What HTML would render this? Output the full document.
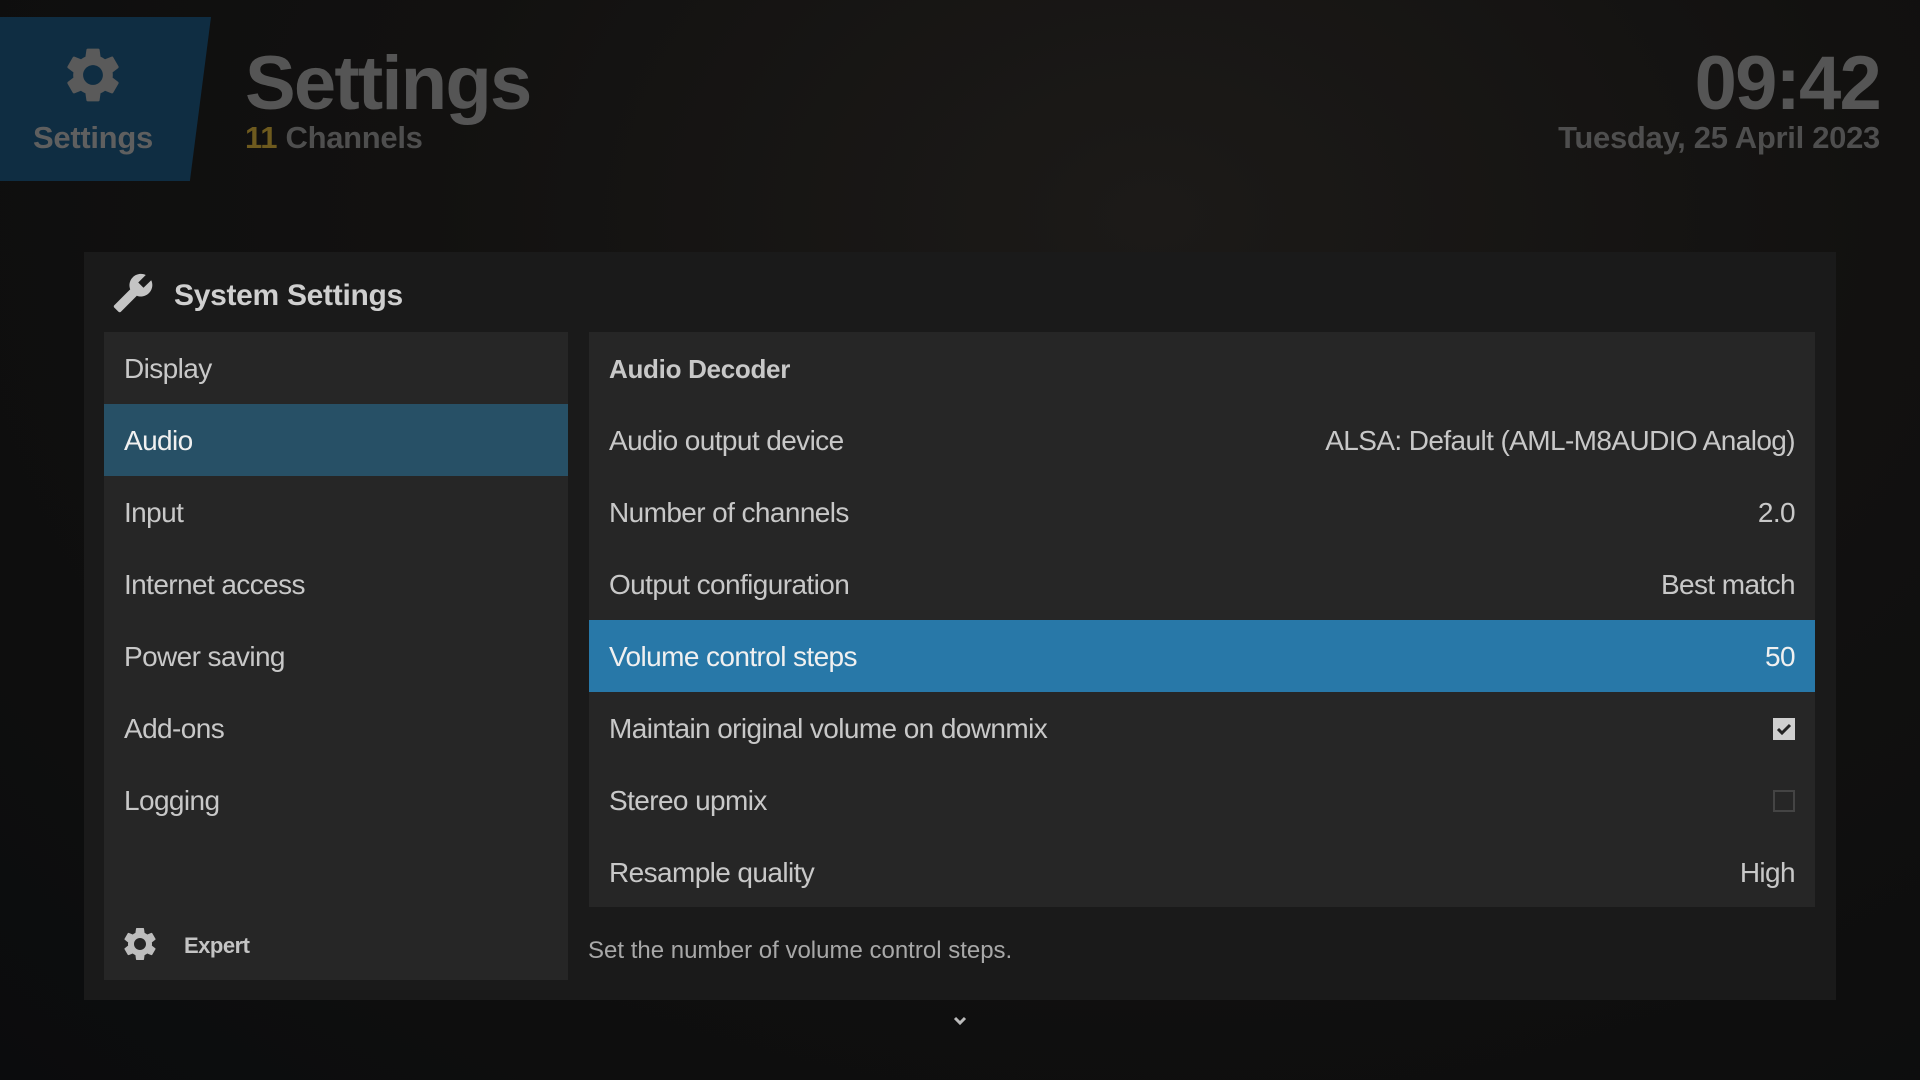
<!DOCTYPE html>
<html><head><meta charset="utf-8"><style>
*{margin:0;padding:0;box-sizing:border-box}
body{width:1920px;height:1080px;overflow:hidden;font-family:"Liberation Sans",sans-serif;
background:radial-gradient(ellipse at 60% 20%,#1c1a18 0%,#121110 45%,#0b0c0d 100%);position:relative;color:#ccc}
.abs{position:absolute}
.tile{left:0;top:17px;width:211px;height:164px;background:#0f2d42;clip-path:polygon(0 0,100% 0,90% 100%,0 100%)}
.big{font-weight:bold;font-size:76px;color:#555;letter-spacing:-1.8px}
.sub{font-weight:bold;font-size:31px;color:#4e4e4e;letter-spacing:-0.3px}
.panel{left:84px;top:252px;width:1752px;height:748px;background:#1a1a1a}
.left{left:104px;top:332px;width:464px;height:648px;background:#262626}
.item{position:absolute;left:0;width:464px;height:72px;line-height:74px;padding-left:20px;font-size:28px;color:#c8c8c8;letter-spacing:-0.6px}
.right{left:589px;top:332px;width:1226px;height:575px;background:#262626}
.row{position:absolute;left:0;width:1226px;height:72px;line-height:74px;padding:0 20px;font-size:28px;color:#c8c8c8;letter-spacing:-0.6px}
.row .v{position:absolute;right:20px;top:0}
.sel{background:#2878a8;color:#f0f0f0}
</style></head><body>
<div class="abs tile"></div>
<svg class="abs" style="left:60px;top:42px" width="66" height="66" viewBox="0 0 24 24"><path fill="#5a5a5a" d="M19.14 12.94c.04-.3.06-.61.06-.94 0-.32-.02-.64-.07-.94l2.03-1.58a.49.49 0 0 0 .12-.61l-1.92-3.32a.488.488 0 0 0-.59-.22l-2.39.96c-.5-.38-1.03-.7-1.62-.94l-.36-2.54a.484.484 0 0 0-.48-.41h-3.84c-.24 0-.43.17-.47.41l-.36 2.54c-.59.24-1.130.57-1.62.94l-2.39-.96c-.22-.08-.47 0-.59.22L2.74 8.87c-.12.21-.08.47.12.61l2.03 1.58c-.05.3-.09.63-.09.94s.02.64.07.94l-2.03 1.58a.49.49 0 0 0-.12.61l1.92 3.32c.12.22.37.29.59.22l2.39-.96c.5.38 1.03.7 1.62.94l.36 2.54c.05.24.24.41.48.41h3.84c.24 0 .44-.17.47-.41l.36-2.54c.59-.24 1.13-.56 1.62-.94l2.39.96c.22.08.47 0 .59-.22l1.92-3.32c.12-.22.07-.47-.12-.61l-2.01-1.58zM12 15.6c-1.98 0-3.6-1.62-3.6-3.6s1.62-3.6 3.6-3.6 3.6 1.62 3.6 3.6-1.62 3.6-3.6 3.6z"/></svg>
<div class="abs sub" style="left:33px;top:120px;color:#5f5f5f">Settings</div>
<div class="abs big" style="left:245px;top:40px">Settings</div>
<div class="abs sub" style="left:245px;top:120px"><span style="color:#6e5a1e">11</span> Channels</div>
<div class="abs big" style="right:40px;top:40px">09:42</div>
<div class="abs sub" style="right:40px;top:120px">Tuesday, 25 April 2023</div>

<div class="abs panel"></div>
<svg class="abs" style="left:112px;top:272px" width="42" height="42" viewBox="0 0 24 24"><path fill="#c4c4c4" d="M22.7 19l-9.1-9.1c.9-2.3.4-5-1.5-6.9-2-2-5-2.4-7.4-1.3L9 6 6 9 1.6 4.7C.4 7.1.9 10.1 2.9 12.1c1.9 1.9 4.6 2.4 6.9 1.5l9.1 9.1c.4.4 1 .4 1.4 0l2.3-2.3c.5-.4.5-1.1.1-1.4z" transform="translate(24 0) scale(-1 1)"/></svg>
<div class="abs" style="left:174px;top:279px;font-size:30px;font-weight:bold;color:#cfcfcf;letter-spacing:-0.3px">System Settings</div>

<div class="abs left">
<div class="item" style="top:0">Display</div>
<div class="item" style="top:72px;background:#275066;color:#f0f0f0">Audio</div>
<div class="item" style="top:144px">Input</div>
<div class="item" style="top:216px">Internet access</div>
<div class="item" style="top:288px">Power saving</div>
<div class="item" style="top:360px">Add-ons</div>
<div class="item" style="top:432px">Logging</div>
</div>
<svg class="abs" style="left:120px;top:924px" width="40" height="40" viewBox="0 0 24 24"><path fill="#bdbdbd" d="M19.14 12.94c.04-.3.06-.61.06-.94 0-.32-.02-.64-.07-.94l2.03-1.58a.49.49 0 0 0 .12-.61l-1.92-3.32a.488.488 0 0 0-.59-.22l-2.39.96c-.5-.38-1.03-.7-1.62-.94l-.36-2.54a.484.484 0 0 0-.48-.41h-3.84c-.24 0-.43.17-.47.41l-.36 2.54c-.59.24-1.13.57-1.62.94l-2.39-.96c-.22-.08-.47 0-.59.22L2.74 8.87c-.12.21-.08.47.12.61l2.03 1.58c-.05.3-.09.63-.09.94s.02.64.07.94l-2.03 1.58a.49.49 0 0 0-.12.61l1.92 3.32c.12.22.37.29.59.22l2.39-.96c.5.38 1.03.7 1.62.94l.36 2.54c.05.24.24.41.48.41h3.84c.24 0 .44-.17.47-.41l.36-2.54c.59-.24 1.13-.56 1.62-.94l2.39.96c.22.08.47 0 .59-.22l1.92-3.32c.12-.22.07-.47-.12-.61l-2.01-1.58zM12 15.6c-1.98 0-3.6-1.620-3.6-3.6s1.62-3.6 3.6-3.6 3.6 1.62 3.6 3.6-1.62 3.6-3.6 3.6z"/></svg>
<div class="abs" style="left:184px;top:933px;font-size:22px;font-weight:bold;color:#c4c4c4;letter-spacing:-0.5px">Expert</div>

<div class="abs right">
<div class="row" style="top:0;font-weight:bold;font-size:26px;letter-spacing:-0.3px">Audio Decoder</div>
<div class="row" style="top:72px">Audio output device<span class="v">ALSA: Default (AML-M8AUDIO Analog)</span></div>
<div class="row" style="top:144px">Number of channels<span class="v">2.0</span></div>
<div class="row" style="top:216px">Output configuration<span class="v">Best match</span></div>
<div class="row sel" style="top:288px">Volume control steps<span class="v">50</span></div>
<div class="row" style="top:360px">Maintain original volume on downmix<span class="v" style="top:26px;width:22px;height:22px;background:#cfcfcf"><svg width="22" height="22" viewBox="0 0 22 22" style="display:block"><path d="M5 11l4 4 8-8" stroke="#222" stroke-width="3" fill="none"/></svg></span></div>
<div class="row" style="top:432px">Stereo upmix<span class="v" style="top:26px;width:22px;height:22px;border:2px solid #444"></span></div>
<div class="row" style="top:504px">Resample quality<span class="v">High</span></div>
</div>
<div class="abs" style="left:588px;top:937px;font-size:24px;color:#a8a8a8;letter-spacing:0px">Set the number of volume control steps.</div>
<svg class="abs" style="left:952px;top:1014px" width="16" height="14" viewBox="0 0 16 14"><path d="M3 4l5 5 5-5" stroke="#bbb" stroke-width="3" fill="none"/></svg>
</body></html>
